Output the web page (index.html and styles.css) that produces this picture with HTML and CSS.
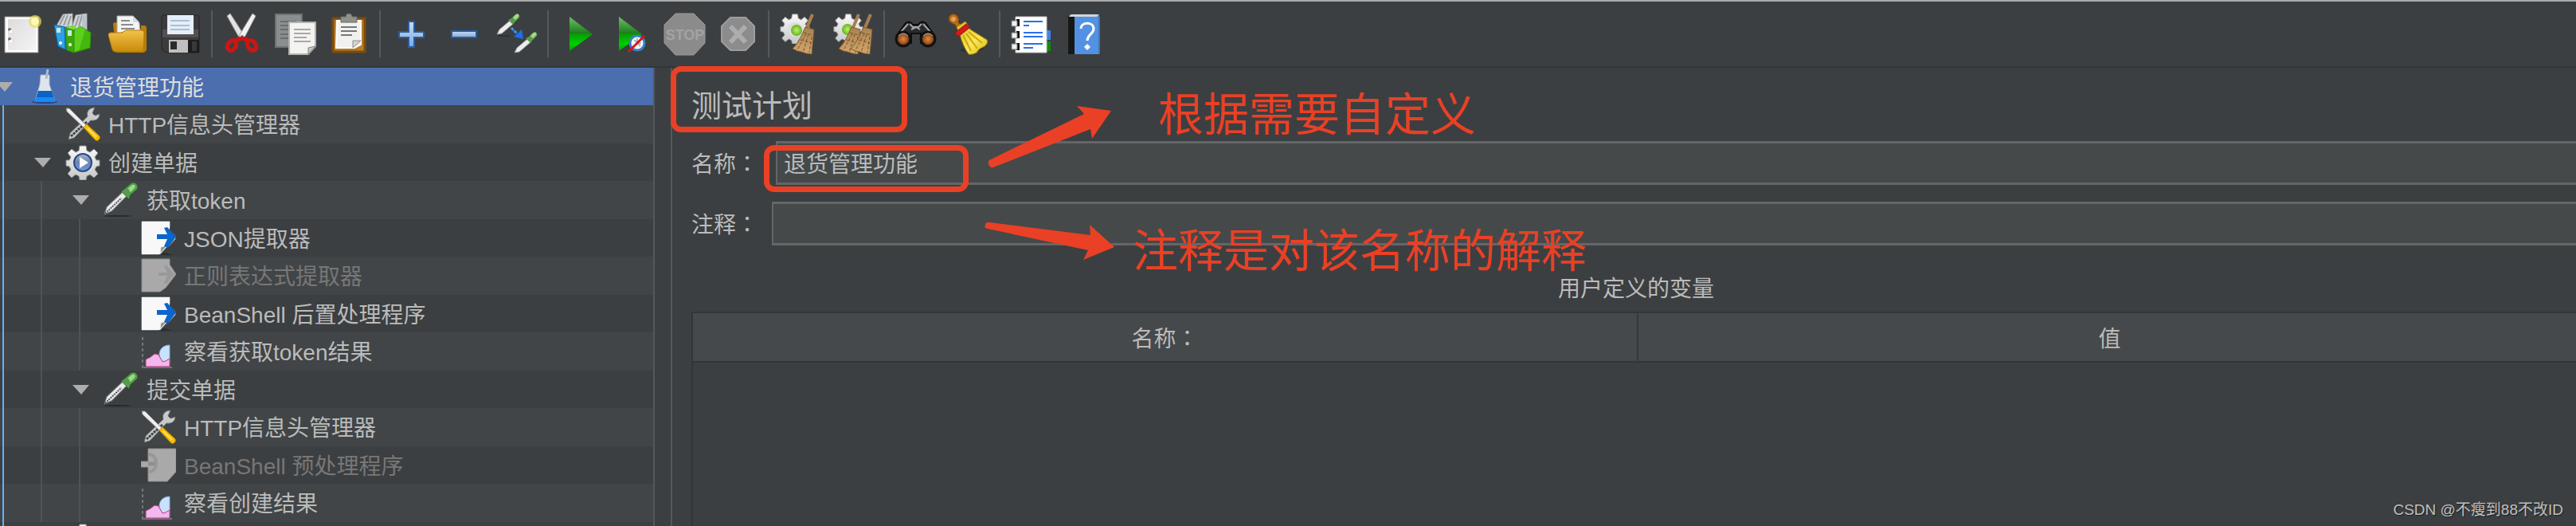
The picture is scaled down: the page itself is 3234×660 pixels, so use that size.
FILE: index.html
```html
<!DOCTYPE html>
<html lang="zh-CN">
<head>
<meta charset="utf-8">
<title>退货管理功能</title>
<link rel="stylesheet" href="styles.css">
</head>
<body>
<svg class="defs" aria-hidden="true">
  <defs>
    <linearGradient id="gold" x2="0" y2="1"><stop offset="0" stop-color="#f3c24a"/><stop offset="1" stop-color="#c98a08"/></linearGradient>
    <linearGradient id="paper" x2="1" y2="1"><stop offset="0" stop-color="#dcdcdc"/><stop offset="1" stop-color="#f4f4f4"/></linearGradient>
    <linearGradient id="go" x2="0" y2="1"><stop offset="0" stop-color="#6fbf6a"/><stop offset=".48" stop-color="#1e7d1c"/><stop offset=".52" stop-color="#04a004"/><stop offset=".8" stop-color="#00cf00"/><stop offset="1" stop-color="#0a960a"/></linearGradient>
    <linearGradient id="steel" x2="0" y2="1"><stop offset="0" stop-color="#c9dcf2"/><stop offset="1" stop-color="#7fa9dc"/></linearGradient>
    <linearGradient id="straw" x2="0" y2="1"><stop offset="0" stop-color="#a98250"/><stop offset="1" stop-color="#d3a76c"/></linearGradient>
    <linearGradient id="metal" x2="0" y2="1"><stop offset="0" stop-color="#fafafa"/><stop offset="1" stop-color="#c6c6c6"/></linearGradient>
    <linearGradient id="orb" x2="0" y2="1"><stop offset="0" stop-color="#a9b6c9"/><stop offset=".5" stop-color="#6b84b0"/><stop offset="1" stop-color="#6f9ade"/></linearGradient>
    <linearGradient id="yellow" x2="1" y2="1"><stop offset="0" stop-color="#d9bc12"/><stop offset=".6" stop-color="#fbe75a"/><stop offset="1" stop-color="#d8b20a"/></linearGradient>
    <radialGradient id="lens"><stop offset="0" stop-color="#e08a45"/><stop offset=".6" stop-color="#a0561f"/><stop offset="1" stop-color="#23150c"/></radialGradient>
    <radialGradient id="lime"><stop offset="0" stop-color="#c0f06a"/><stop offset="1" stop-color="#63b41a"/></radialGradient>
  </defs>
  <symbol id="cog" viewBox="0 0 44 44">
    <path fill="url(#metal)" stroke="#8d8d8d" d="M18 1h8l1 6 4 2 5-4 5 5-4 5 2 4 4 0v7l-4 1-2 4 4 5-5 5-5-4-4 2-1 5h-8l-1-5-4-2-5 4-5-5 4-5-2-4-4-1v-7l4 0 2-4-4-5 5-5 5 4 4-2z"/>
  </symbol>
  <symbol id="i-group" viewBox="0 0 44 44">
    <use href="#cog"/>
    <circle cx="22" cy="22" r="11" fill="url(#orb)" stroke="#244a8c" stroke-width="2"/>
    <path d="M18 15l11 7-11 7z" fill="#fff"/>
  </symbol>
  <symbol id="i-dropper" viewBox="3 1 43 43">
    <ellipse cx="20" cy="42" rx="17" ry="1" fill="#26292a"/>
    <path d="M4 40l3-9 19-18 5 5-18 18z" fill="#ececec" stroke="#77797a" stroke-width="1"/>
    <path d="M5 39l20-19" stroke="#55585a" stroke-width="2" stroke-dasharray="2 1"/>
    <path d="M25 12l9 9 2-5 8-7c2-5-2-9-7-7l-7 6z" fill="#4f9f45"/>
    <path d="M33 8l5-4c3-1 5 1 3 4l-5 5z" fill="#9ad787"/>
  </symbol>
  <symbol id="i-tools" viewBox="0 0 44 44">
    <path d="M4 41l2-8 22-21c-2-6 2-11 9-11l-3 7 3 3 6-2c0 6-5 9-11 8L11 39z" fill="#c9cbcb" stroke="#6c6f70"/>
    <path d="M7 37l20-18" stroke="#3f4344" stroke-width="3" stroke-dasharray="3 1"/>
    <path d="M1 2l4 0 21 21-3 3L2 6z" fill="#eee" stroke="#8a8c8d"/>
    <path d="M23 26l4-4 16 15c1 4-2 6-5 5z" fill="#f9bd04" stroke="#c88c00"/>
    <path d="M28 27l11 11" stroke="#ffe16a" stroke-width="2"/>
  </symbol>
  <symbol id="i-post" viewBox="0 0 44 44">
    <path d="M8 43h32l-14-4z" fill="#2a2d2e"/>
    <path d="M1 1h35v9l7 9v4L31 36l-7 6H1z" fill="#f8f8f8" stroke="#a9aaab"/>
    <path d="M36 8l8 12-12 16-6 6-4 2z" fill="#3e4143"/>
    <path d="M1 1h35v28L24 42H1z" fill="#f8f8f8"/>
    <path d="M24 41l1-8 8-2z" fill="#8d9092" stroke="#e8e8e8"/>
    <path d="M20 17h13l-4-8 4-1 11 12-11 14-4-2 4-9H20z" fill="#0a66cc"/>
  </symbol>
  <symbol id="i-post-off" viewBox="0 0 44 44">
    <path d="M1 1h35v7l8 12-13 17-7 5H1z" fill="#a9a9a9" stroke="#8e8e8e"/>
    <path d="M22 18h11l-4-8 3-1 10 11-10 12-3-1 4-9H22z" fill="#999"/>
  </symbol>
  <symbol id="i-pre-off" viewBox="0 0 44 44">
    <path d="M9 1h35v29L33 42H9V24H0v-7h9z" fill="#a9a9a9" stroke="#8e8e8e"/>
    <path d="M10 8c12 0 12 22 0 22" fill="none" stroke="#979797" stroke-width="4"/>
    <path d="M9 20h8" stroke="#8f8f8f" stroke-width="5"/>
  </symbol>
  <symbol id="i-chart" viewBox="2 0 44 44">
    <path d="M4 4v38" stroke="#727576" stroke-width="2" stroke-dasharray="4 3"/>
    <path d="M3 42h38" stroke="#727576" stroke-width="2"/>
    <path d="M25 26c0-7 5-12 13-12v24H27z" fill="#c9e1fb" stroke="#78aee8"/>
    <path d="M8 41V32l6-3 5-4 5 1 5 9 4-1 5-3v10z" fill="#f5b5ee" stroke="#b23f7c"/>
  </symbol>
  <symbol id="i-flask" viewBox="0 0 44 44">
    <ellipse cx="22" cy="41" rx="16" ry="2" fill="#2c477c"/>
    <path d="M17 7h11v12l7 21H10l6-21z" fill="#dfe5ea" stroke="#aab6c4"/>
    <path d="M14 27h17l4 13H10z" fill="#0b63c4"/>
    <path d="M12 35h21l2 6H9z" fill="#178af8"/>
    <path d="M24 12l2-12" stroke="#aebbd0" stroke-width="3"/>
  </symbol>
  <symbol id="arrow" viewBox="0 0 21 12"><path d="M0 0h21L11 12z" fill="#adadad"/></symbol>
  <symbol id="straws" viewBox="0 0 30 52">
    <path d="M26 1l-8 19" stroke="#a57f50" stroke-width="4"/>
    <path d="M17 17l11 3-3 31-7-1-6-2-5-1-6-3c8-8 11-16 16-27z" fill="url(#straw)" stroke="#7b5a34"/>
    <path d="M18 25L7 46m14-20l-7 23m11-20l-3 20M11 33l14 4M15 24l12 3" stroke="#75542e" fill="none" stroke-dasharray="4 2"/>
  </symbol>
</svg>

<header class="topbar">
<div class="toolbar" role="toolbar">
  <button class="tool" aria-label="新建"><svg viewBox="0 0 52 52">
    <path d="M4 4h42v45H4z" fill="#fff" stroke="#8d8d87" stroke-width="1"/><path d="M8 7h35v39H8z" fill="url(#paper)"/>
    <circle cx="42" cy="10" r="8" fill="#e9dc5a" opacity=".7"/><circle cx="42" cy="10" r="5" fill="#fff9b5"/>
    <circle cx="10" cy="20" r="2" fill="#777"/><circle cx="10" cy="32" r="2" fill="#777"/><path d="M10 21h3v3h-3zM10 33h3v3h-3z" fill="#fff"/></svg></button>
  <button class="tool" aria-label="模板"><svg viewBox="0 0 52 52">
    <path d="M3 15L11 1l12-1v18zM22 19l5-17 14-2v24z" fill="#d5d7d8" stroke="#9da0a2"/><path d="M7 14l6-12M12 15l5-13M17 15l4-12M27 15l4-12M31 16l4-14" stroke="#989c9e" stroke-width="2"/>
    <path d="M35 3l6-2v22l-6-3z" fill="#b8c4cc"/>
    <path d="M0 14l13 3 14-2-4 30-10 0-8-4z" fill="#1379c2"/><path d="M0 14l13 3 1 28-9-4z" fill="#2fa0e8" stroke="#0c66a8"/>
    <path d="M14 18l8-3h6l-3 6z" fill="#7edb3c"/>
    <path d="M25 21l8-5 13 8-1 19-20 6z" fill="#43b80c" stroke="#2f8f08"/><path d="M25 21l8-5 6 4-8 26-6 2z" fill="#5dd01e"/>
    <path d="M14 18l11 3v28l-9-3z" fill="#3da60d" stroke="#2f8f08"/>
    <path d="M17 21h5v7h-5zM3 18h5v6H3z" fill="#c8ecd8"/><circle cx="20" cy="39" r="2" fill="#fff"/><circle cx="8" cy="37" r="2" fill="#fff"/></svg></button>
  <button class="tool" aria-label="打开"><svg viewBox="0 0 52 52">
    <path d="M8 14q0-3 3-3h6v8h26v-4h4q3 0 3 3v28l-3 3H12z" fill="#b87c08"/>
    <path d="M13 3h20l8 9 1 18H13z" fill="#f4f4f4" stroke="#aaa"/><path d="M33 3v8h8z" fill="#cfdde2"/>
    <path d="M18 9h11M18 14h15M18 19h17M18 24h12" stroke="#8a8c8c" stroke-width="2"/>
    <path d="M2 27q0-3 3-3h14l5-3h20q3 0 3 3l-1 24H11q-3 0-4-3z" fill="url(#gold)" stroke="#b37a08"/></svg></button>
  <button class="tool" aria-label="保存"><svg viewBox="0 0 52 52">
    <path d="M6 2h42q2 0 2 2v45H8l-5-4V5q0-3 3-3z" fill="#3d3a3e" stroke="#242424"/><path d="M4 20h45v10H4z" fill="#545155"/>
    <path d="M10 2h33v24H10z" fill="#e6eef8"/><path d="M14 9h24M14 15h24M14 20h24" stroke="#a8c0da" stroke-width="2"/>
    <path d="M12 33h38v16H12z" fill="#1d1d1e"/><path d="M12 33h24v16H12z" fill="#bfbfbf"/><path d="M14 35h8v10h-8z" fill="#2b2b2b"/><path d="M41 35h6v12h-6z" fill="#393939"/></svg></button>
  <span class="sep"></span>
  <button class="tool" aria-label="剪切"><svg viewBox="0 0 52 52">
    <path d="M6 3l4-3 18 28-4 4-4-4z" fill="#e3e3e3" stroke="#9b9b9b"/><path d="M42 3l-4-3-17 28 4 5 4-5z" fill="#f1f1f1" stroke="#9b9b9b"/>
    <circle cx="25" cy="29" r="2" fill="#777"/>
    <g fill="none" stroke="#cf1414" stroke-width="5"><ellipse cx="12" cy="40" rx="5" ry="7" transform="rotate(35 12 40)"/><ellipse cx="37" cy="40" rx="5" ry="7" transform="rotate(-35 37 40)"/><path d="M17 33l8-2 7 2"/></g></svg></button>
  <button class="tool" aria-label="复制"><svg viewBox="0 0 52 52">
    <path d="M1 1h33v41H1z" fill="#8b8e8e" stroke="#6f7272" stroke-width="2"/><path d="M7 10h20M7 15h20M7 20h20M7 26h20M7 31h10" stroke="#6b6e6e" stroke-width="2"/>
    <path d="M18 11h33v30L42 51H18z" fill="#f3f3f1" stroke="#b2b4ae" stroke-width="2"/><path d="M51 41l-9 10 0-8z" fill="#c5c7c1" stroke="#7d8078"/>
    <path d="M24 20h21M24 25h21M24 30h16M24 35h21" stroke="#a7a9a9" stroke-width="2"/></svg></button>
  <button class="tool" aria-label="粘贴"><svg viewBox="0 0 52 52">
    <path d="M7 6h40v42H7z" fill="#b57b27" stroke="#7c4c0c" stroke-width="3"/><path d="M12 9h30v30l-8 4H11z" fill="#f1f1ef" stroke="#fff" stroke-width="2"/>
    <path d="M42 34l-10 9 0-9z" fill="#d3d5d0" stroke="#8b8d88"/><path d="M17 17h20M17 22h20M17 27h14" stroke="#777" stroke-width="2"/>
    <path d="M17 4h6q0-4 4-4t4 4h6v7H17z" fill="#8f918a" stroke="#666962"/></svg></button>
  <span class="sep"></span>
  <button class="tool" aria-label="展开"><svg viewBox="0 0 52 52"><path d="M23 10h7v13h12v7H30v12h-7V30H11v-7h12z" fill="url(#steel)" stroke="#2a5d9f" stroke-width="2"/></svg></button>
  <button class="tool" aria-label="折叠"><svg viewBox="0 0 52 52"><path d="M11 22h31v8H11z" fill="url(#steel)" stroke="#2a5d9f" stroke-width="2"/></svg></button>
  <button class="tool" aria-label="切换"><svg viewBox="0 0 52 52">
    <path d="M3 28h15" stroke="#2f3233" stroke-width="2"/>
    <g id="pip"><path d="M2 26l3-6L18 9l4 4L8 25z" fill="#ededed" stroke="#999"/><path d="M16 8l6 6 2-3 6-6c1-4-2-6-5-4l-5 5z" fill="#5b9b4c"/><path d="M22 5l4-4c3-1 4 1 3 3l-4 4z" fill="#a6d98b"/></g>
    <use href="#pip" x="22" y="23"/>
    <path d="M20 18l7 7" stroke="#4a8be8" stroke-width="3" stroke-dasharray="4 1"/><path d="M23 29l10-9 2 12z" fill="#1d6fe8"/></svg></button>
  <span class="sep"></span>
  <button class="tool" aria-label="启动"><svg viewBox="0 0 52 52"><path d="M14 4l29 22-29 21z" fill="url(#go)"/></svg></button>
  <button class="tool" aria-label="不停顿启动"><svg viewBox="0 0 52 52"><path d="M10 4l29 22-29 21z" fill="url(#go)"/><circle cx="33" cy="37" r="9" fill="#fff" stroke="#3c7fc6" stroke-width="3"/><path d="M29 33l8 8M33 31v6h5" stroke="#a9b4c0" stroke-width="2" fill="none"/><path d="M22 48l20-20" stroke="#d01a1a" stroke-width="3"/></svg></button>
  <button class="tool" aria-label="停止" disabled><svg viewBox="0 0 52 52"><path d="M15 0h23l14 14v23L38 52H15L1 37V14z" fill="#8b8b8b" stroke="#999" stroke-width="1"/><text class="stop-word" x="27" y="33" text-anchor="middle">STOP</text></svg></button>
  <button class="tool" aria-label="关闭" disabled><svg viewBox="0 0 52 52"><path d="M18 5h19l11 11v19L37 46H18L7 35V16z" fill="#8c8c8c" stroke="#9e9e9e" stroke-width="2"/><path d="M18 16l19 20M37 16L18 36" stroke="#adadad" stroke-width="6"/></svg></button>
  <span class="sep"></span>
  <button class="tool" aria-label="清除"><svg viewBox="0 0 52 52"><use href="#cog" x="1" y="0" width="38" height="38"/><circle cx="20" cy="20" r="9" fill="#ddd"/><circle cx="22" cy="21" r="7" fill="url(#lime)"/><use href="#straws" x="16" y="0" width="30" height="52"/></svg></button>
  <button class="tool" aria-label="清除全部"><svg viewBox="0 0 52 52"><use href="#cog" x="2" y="0" width="38" height="38"/><circle cx="20" cy="20" r="7" fill="url(#lime)"/><use href="#straws" x="8" y="0" width="30" height="52"/><use href="#straws" x="23" y="0" width="30" height="52"/></svg></button>
  <span class="sep"></span>
  <button class="tool" aria-label="查找"><svg viewBox="0 0 52 52">
    <path d="M3 27L14 12q5-4 9 2h7q4-6 9-2l11 15v10H33V25H21v12H3z" fill="#2a2b2c" stroke="#0d0d0d" stroke-width="2"/>
    <path d="M8 23l9-10M45 23l-9-10M19 13l4 4h7l4-4M21 20l6-3 5 3" stroke="#a3a6a8" stroke-width="2" fill="none"/>
    <circle cx="11" cy="32" r="9" fill="url(#lens)" stroke="#111" stroke-width="3"/><circle cx="42" cy="32" r="9" fill="url(#lens)" stroke="#111" stroke-width="3"/>
    <path d="M5 28q6-6 12 0M36 28q6-6 12 0" stroke="#b8b8b8" fill="none"/></svg></button>
  <button class="tool" aria-label="重置查找"><svg viewBox="0 0 52 52">
    <path d="M14 46q16 6 34-2l-12-4z" fill="#303334"/>
    <path d="M3 3q5-5 10 0 3 5 1 8l6 6-5 4-5-7Q-1 10 3 3z" fill="#b56c1c" stroke="#7a430a"/><circle cx="8" cy="7" r="3" fill="#e0a35c"/>
    <path d="M12 17l11-7 6 10 21 13q2 4-3 8-8 3-10 8-5 3-10 2Q20 41 16 26z" fill="url(#yellow)" stroke="#a98a08"/>
    <path d="M20 27l10 20M24 25l14 19M27 23l17 14" stroke="#cba60c" stroke-width="2"/>
    <path d="M10 24l14-11 4 5-14 11z" fill="#d51a1a" stroke="#941010"/></svg></button>
  <span class="sep"></span>
  <button class="tool" aria-label="函数助手"><svg viewBox="0 0 52 52">
    <path d="M44 21h7v12h-7z" fill="#3c82ea"/><path d="M44 35h7v12h-7z" fill="#118a13"/>
    <path d="M7 4h39v45H7z" fill="#fff" stroke="#c3c3c3"/>
    <path d="M8 7h4v9H8zM8 22h4v9H8zM8 37h4v9H8z" fill="#111"/><path d="M2 9h7v7H2zM2 24h7v7H2zM2 38h7v7H2z" fill="#f0f0f0" stroke="#777"/>
    <path d="M17 10h24M17 15h7M17 24h24M17 29h24M17 38h24M17 43h12" stroke="#2a6fe8" stroke-width="2"/></svg></button>
  <button class="tool" aria-label="帮助"><svg viewBox="0 0 52 52">
    <path d="M7 3h8v48H7z" fill="#171717"/><path d="M15 3l31-2v50H15z" fill="#5391e2"/><path d="M8 4q1-3 4-3h33l-2 3H9z" fill="#cfd6dc"/><path d="M45 4h2v46h-2z" fill="#3f74ba"/>
    <path d="M23 19c0-9 16-9 16 0 0 7-8 7-8 15" fill="none" stroke="#fff" stroke-width="3"/><path d="M31 38l4 4-4 4-4-4z" fill="#fff"/></svg></button>
</div>
</header>

<main class="workspace">
  <ul class="tree" role="tree">
    <li class="row selected"><span class="toggle"><svg class="arrow"><use href="#arrow"/></svg></span><svg class="icon"><use href="#i-flask"/></svg><span class="name">退货管理功能</span></li>
    <li class="row"><i class="guide root"></i><span class="toggle"></span><svg class="icon"><use href="#i-tools"/></svg><span class="name">HTTP信息头管理器</span></li>
    <li class="row"><i class="guide root"></i><span class="toggle"><svg class="arrow"><use href="#arrow"/></svg></span><svg class="icon"><use href="#i-group"/></svg><span class="name">创建单据</span></li>
    <li class="row"><i class="guide root"></i><i class="guide"></i><span class="toggle"><svg class="arrow"><use href="#arrow"/></svg></span><svg class="icon"><use href="#i-dropper"/></svg><span class="name">获取token</span></li>
    <li class="row"><i class="guide root"></i><i class="guide"></i><i class="guide leaf"></i><span class="toggle"></span><svg class="icon"><use href="#i-post"/></svg><span class="name">JSON提取器</span></li>
    <li class="row off"><i class="guide root"></i><i class="guide"></i><i class="guide leaf"></i><span class="toggle"></span><svg class="icon"><use href="#i-post-off"/></svg><span class="name">正则表达式提取器</span></li>
    <li class="row"><i class="guide root"></i><i class="guide"></i><i class="guide leaf"></i><span class="toggle"></span><svg class="icon"><use href="#i-post"/></svg><span class="name">BeanShell 后置处理程序</span></li>
    <li class="row"><i class="guide root"></i><i class="guide"></i><i class="guide leaf"></i><span class="toggle"></span><svg class="icon"><use href="#i-chart"/></svg><span class="name">察看获取token结果</span></li>
    <li class="row"><i class="guide root"></i><i class="guide"></i><span class="toggle"><svg class="arrow"><use href="#arrow"/></svg></span><svg class="icon"><use href="#i-dropper"/></svg><span class="name">提交单据</span></li>
    <li class="row"><i class="guide root"></i><i class="guide"></i><i class="guide leaf"></i><span class="toggle"></span><svg class="icon"><use href="#i-tools"/></svg><span class="name">HTTP信息头管理器</span></li>
    <li class="row off"><i class="guide root"></i><i class="guide"></i><i class="guide leaf"></i><span class="toggle"></span><svg class="icon"><use href="#i-pre-off"/></svg><span class="name">BeanShell 预处理程序</span></li>
    <li class="row"><i class="guide root"></i><i class="guide"></i><i class="guide leaf"></i><span class="toggle"></span><svg class="icon"><use href="#i-chart"/></svg><span class="name">察看创建结果</span></li>
    <li class="row"><i class="guide root"></i><span class="toggle"></span><svg class="icon"><use href="#i-group"/></svg></li>
  </ul>

  <section class="panel">
    <h1 class="title">测试计划</h1>
    <div class="field"><label class="label" for="name">名称<span class="colon" lang="zh-TW">：</span></label><input class="input" id="name" type="text" value="退货管理功能"></div>
    <div class="field comment"><label class="label" for="comment">注释<span class="colon" lang="zh-TW">：</span></label><input class="input" id="comment" type="text"></div>
    <h2 class="subtitle">用户定义的变量</h2>
    <div class="grid">
      <table class="vars"><thead><tr><th>名称<span class="colon" lang="zh-TW">：</span></th><th>值</th></tr></thead></table>
    </div>

    <div class="marks">
      <div class="frame frame-title"></div>
      <div class="frame frame-name"></div>
      <svg class="pointer" viewBox="0 0 600 260">
        <path d="M400 121q-1-5 3-6L520 58l-9-10 43 6-24 35-2-12L406 125q-4 1-6-4z"/>
        <path d="M396 197q1-4 5-3l127 16-1-13 31 28-39 16 6-12-126-27q-5-1-3-5z"/>
      </svg>
      <p class="note note-name">根据需要自定义</p>
      <p class="note note-comment">注释是对该名称的解释</p>
    </div>
  </section>
</main>
<p class="watermark">CSDN @不瘦到88不改ID</p>
</body>
</html>
```

FILE: styles.css
```css
* { box-sizing: border-box; }

body {
  margin: 0;
  height: 100vh;
  overflow: hidden;
  display: flex;
  flex-direction: column;
  position: relative;
  background: #3c3f41;
  color: #bbbbbb;
  font-family: "Liberation Sans", "Noto Sans CJK SC", sans-serif;
  font-size: 28px;
}

.defs { position: absolute; width: 0; height: 0; }

/* toolbar */
.topbar {
  flex: none;
  border-top: 2px solid #a8aaaa;
  border-bottom: 2px solid #333638;
}
.toolbar {
  display: flex;
  align-items: center;
  height: 81px;
  margin-left: -5px;
}
.tool {
  width: 66px;
  height: 60px;
  flex: none;
  display: flex;
  align-items: center;
  justify-content: center;
  padding: 0;
  border: 0;
  background: none;
}
.tool svg { width: 52px; height: 52px; overflow: visible; }
.stop-word {
  font: bold 18px "Liberation Sans", sans-serif;
  fill: #a3a3a3;
}
.sep {
  flex: none;
  width: 13px;
  height: 59px;
  display: flex;
  justify-content: center;
}
.sep::before { content: ""; width: 2px; background: #56585a; }

/* layout */
.workspace {
  flex: 1;
  min-height: 0;
  display: grid;
  grid-template-columns: 822px minmax(0, 1fr);
  column-gap: 20px;
}

/* tree */
.tree {
  margin: 0;
  padding: 0;
  list-style: none;
  overflow: hidden;
  border-right: 2px solid #55585a;
}
.row {
  display: flex;
  align-items: center;
  height: 48px;
  padding-left: 3px;
  white-space: pre;
}
.row:nth-child(odd) { height: 47px; }
.row:nth-child(even) { background: #414547; }
.row.selected { background: #4b6eaf; color: #dddddd; }
.row.off { color: #777777; }
.name { padding-bottom: 2px; }
.guide {
  flex: none;
  width: 48px;
  align-self: stretch;
  border-left: 2px solid #505253;
}
.guide.root { border-color: #66b0f2; }
.guide.leaf { width: 47px; }
.toggle { flex: none; width: 31px; display: flex; }
.arrow { flex: none; width: 21px; height: 12px; margin-left: -8px; }
.icon { flex: none; width: 44px; height: 44px; margin-right: 10px; }

/* editor panel */
.panel {
  position: relative;
  display: flex;
  flex-direction: column;
  min-height: 0;
  margin-right: -6px;
  padding: 20px 0 0 24px;
  border-left: 2px solid #55585a;
}
.title {
  margin: 0 0 16px;
  font-size: 38px;
  font-weight: 400;
  line-height: 56px;
}
.field {
  display: flex;
  align-items: center;
  height: 55px;
  margin-bottom: 21px;
}
.label { flex: none; width: 106px; padding-bottom: 2px; }
.comment { margin-bottom: 35px; }
.comment .label { width: 101px; }
.colon { font-family: "Noto Sans CJK TC", sans-serif; }
.input {
  flex: 1;
  min-width: 0;
  height: 55px;
  padding: 0 8px 2px;
  border: solid #646667;
  border-width: 3px 2px;
  border-radius: 0;
  background: #45494a;
  color: #bbbbbb;
  font: inherit;
  outline: 0;
}
.subtitle {
  margin: 0 0 8px;
  font-size: 28px;
  font-weight: 400;
  line-height: 40px;
  text-align: center;
}
.grid {
  flex: 1;
  border-top: 2px solid #323638;
  border-left: 2px solid #323638;
}
.vars {
  width: 100%;
  table-layout: fixed;
  border-spacing: 0;
}
.vars th {
  height: 62px;
  padding: 0;
  border-bottom: 2px solid #323638;
  background: #45494b;
  font-weight: 400;
}
.vars th + th { border-left: 2px solid #36393b; }

/* annotations over the panel */
.marks {
  position: absolute;
  inset: 0;
  pointer-events: none;
  color: #ea4025;
}
.frame {
  position: absolute;
  border: 7px solid #ea4025;
  border-radius: 13px;
}
.frame-title { left: -2px; top: -2px; width: 297px; height: 83px; }
.frame-name { left: 115px; top: 97px; width: 257px; height: 59px; }
.pointer {
  position: absolute;
  left: -3px;
  top: 0;
  width: 600px;
  height: 260px;
  fill: #ea4025;
}
.note {
  position: absolute;
  margin: 0;
  font-size: 57px;
  line-height: 60px;
  white-space: nowrap;
}
.note-name { left: 610px; top: 29px; }
.note-comment { left: 578px; top: 200px; }

.watermark {
  position: absolute;
  right: 16px;
  bottom: 8px;
  margin: 0;
  font-size: 19px;
  line-height: 24px;
  color: #c0c0c0;
  text-shadow: 1px 1px 1px #1c1e1f;
}
```
